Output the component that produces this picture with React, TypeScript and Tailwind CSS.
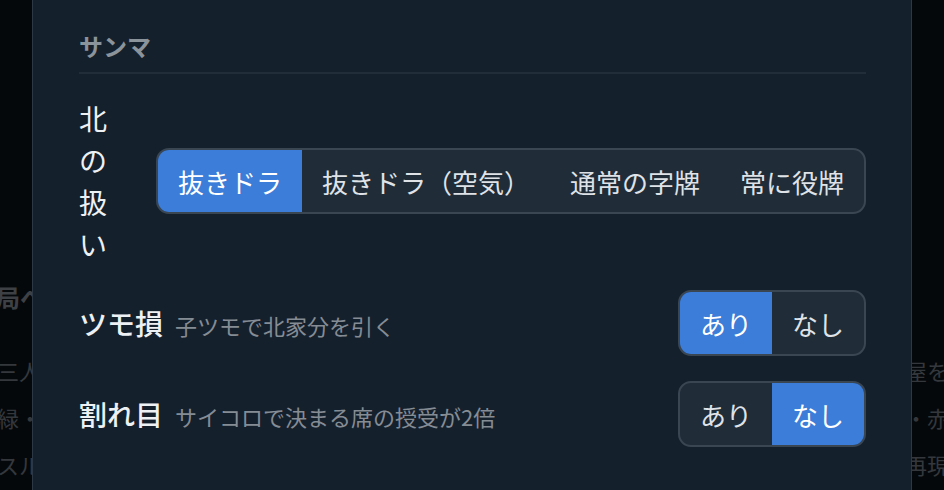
import * as React from "react";
import { useState } from "react";

const font = { fontFamily: '"Noto Sans CJK JP", "Noto Sans", sans-serif' };

function Segmented(props: {
    options: string[],
    value: number,
    onChange: (i: number) => void
}) {
    const { options, value, onChange } = props;
    return (
        <div className="flex shrink-0 overflow-hidden rounded-[13px] border-2 border-[#3b4653] bg-[#212c39]">
            {options.map((option, i) => (
                <button
                    key={option}
                    onClick={() => onChange(i)}
                    className={
                        i === value
                            ? "flex h-[62px] items-center whitespace-nowrap bg-[#3b7dd8] px-5 text-[26px] text-white"
                            : "flex h-[62px] items-center whitespace-nowrap px-5 text-[26px] text-[#dfe3e8]"
                    }
                >
                    {option}
                </button>
            ))}
        </div>
    );
}

function ToggleRow(props: { label: string, hint: string, initial: number }) {
    const [value, setValue] = useState(props.initial);
    return (
        <div className="flex items-center justify-between">
            <div className="flex items-baseline gap-3">
                <span className="text-[28px] font-medium leading-[42px] text-[#eef1f4]">{props.label}</span>
                <span className="text-[22px] text-[#858c94]">{props.hint}</span>
            </div>
            <Segmented options={["あり", "なし"]} value={value} onChange={setValue} />
        </div>
    );
}

export default function App() {
    const [north, setNorth] = useState(0);

    return (
        <div className="relative h-[490px] w-[944px] overflow-hidden bg-[#05080b]" style={font}>
            {/* page behind the dialog */}
            <div className="pt-[281px] text-[#34383d]">
                <div className="-ml-[4px] text-[24px] font-bold leading-[32px] text-[#3d4146]">局へ</div>
                <div className="-ml-[3px] mt-[34px] flex w-[952px] flex-col text-[22px] leading-[47px]">
                    <div className="flex justify-between"><span>三人</span><span>屋を</span></div>
                    <div className="flex justify-between"><span>緑・</span><span>・赤</span></div>
                    <div className="flex justify-between"><span>スル</span><span>再現</span></div>
                </div>
            </div>

            {/* dialog */}
            <div className="absolute bottom-[-20px] left-[32px] top-[-20px] w-[880px] border border-[#2c3845] bg-[#15202d] pl-[46px] pr-[45px] pt-[49px]">
                <div className="border-b-2 border-[#222d3a] pb-[10px] text-[24px] font-bold leading-[32px] text-[#8b939b]">
                    サンマ
                </div>

                <div className="mt-[23px] flex flex-col gap-[25px]">
                    <div className="flex items-center justify-between">
                        <div className="w-7 shrink-0 text-[28px] leading-[42px] text-[#eef1f4]">北の扱い</div>
                        <Segmented
                            options={["抜きドラ", "抜きドラ（空気）", "通常の字牌", "常に役牌"]}
                            value={north}
                            onChange={setNorth}
                        />
                    </div>
                    <ToggleRow label="ツモ損" hint="子ツモで北家分を引く" initial={0} />
                    <ToggleRow label="割れ目" hint="サイコロで決まる席の授受が2倍" initial={1} />
                </div>
            </div>
        </div>
    );
}
